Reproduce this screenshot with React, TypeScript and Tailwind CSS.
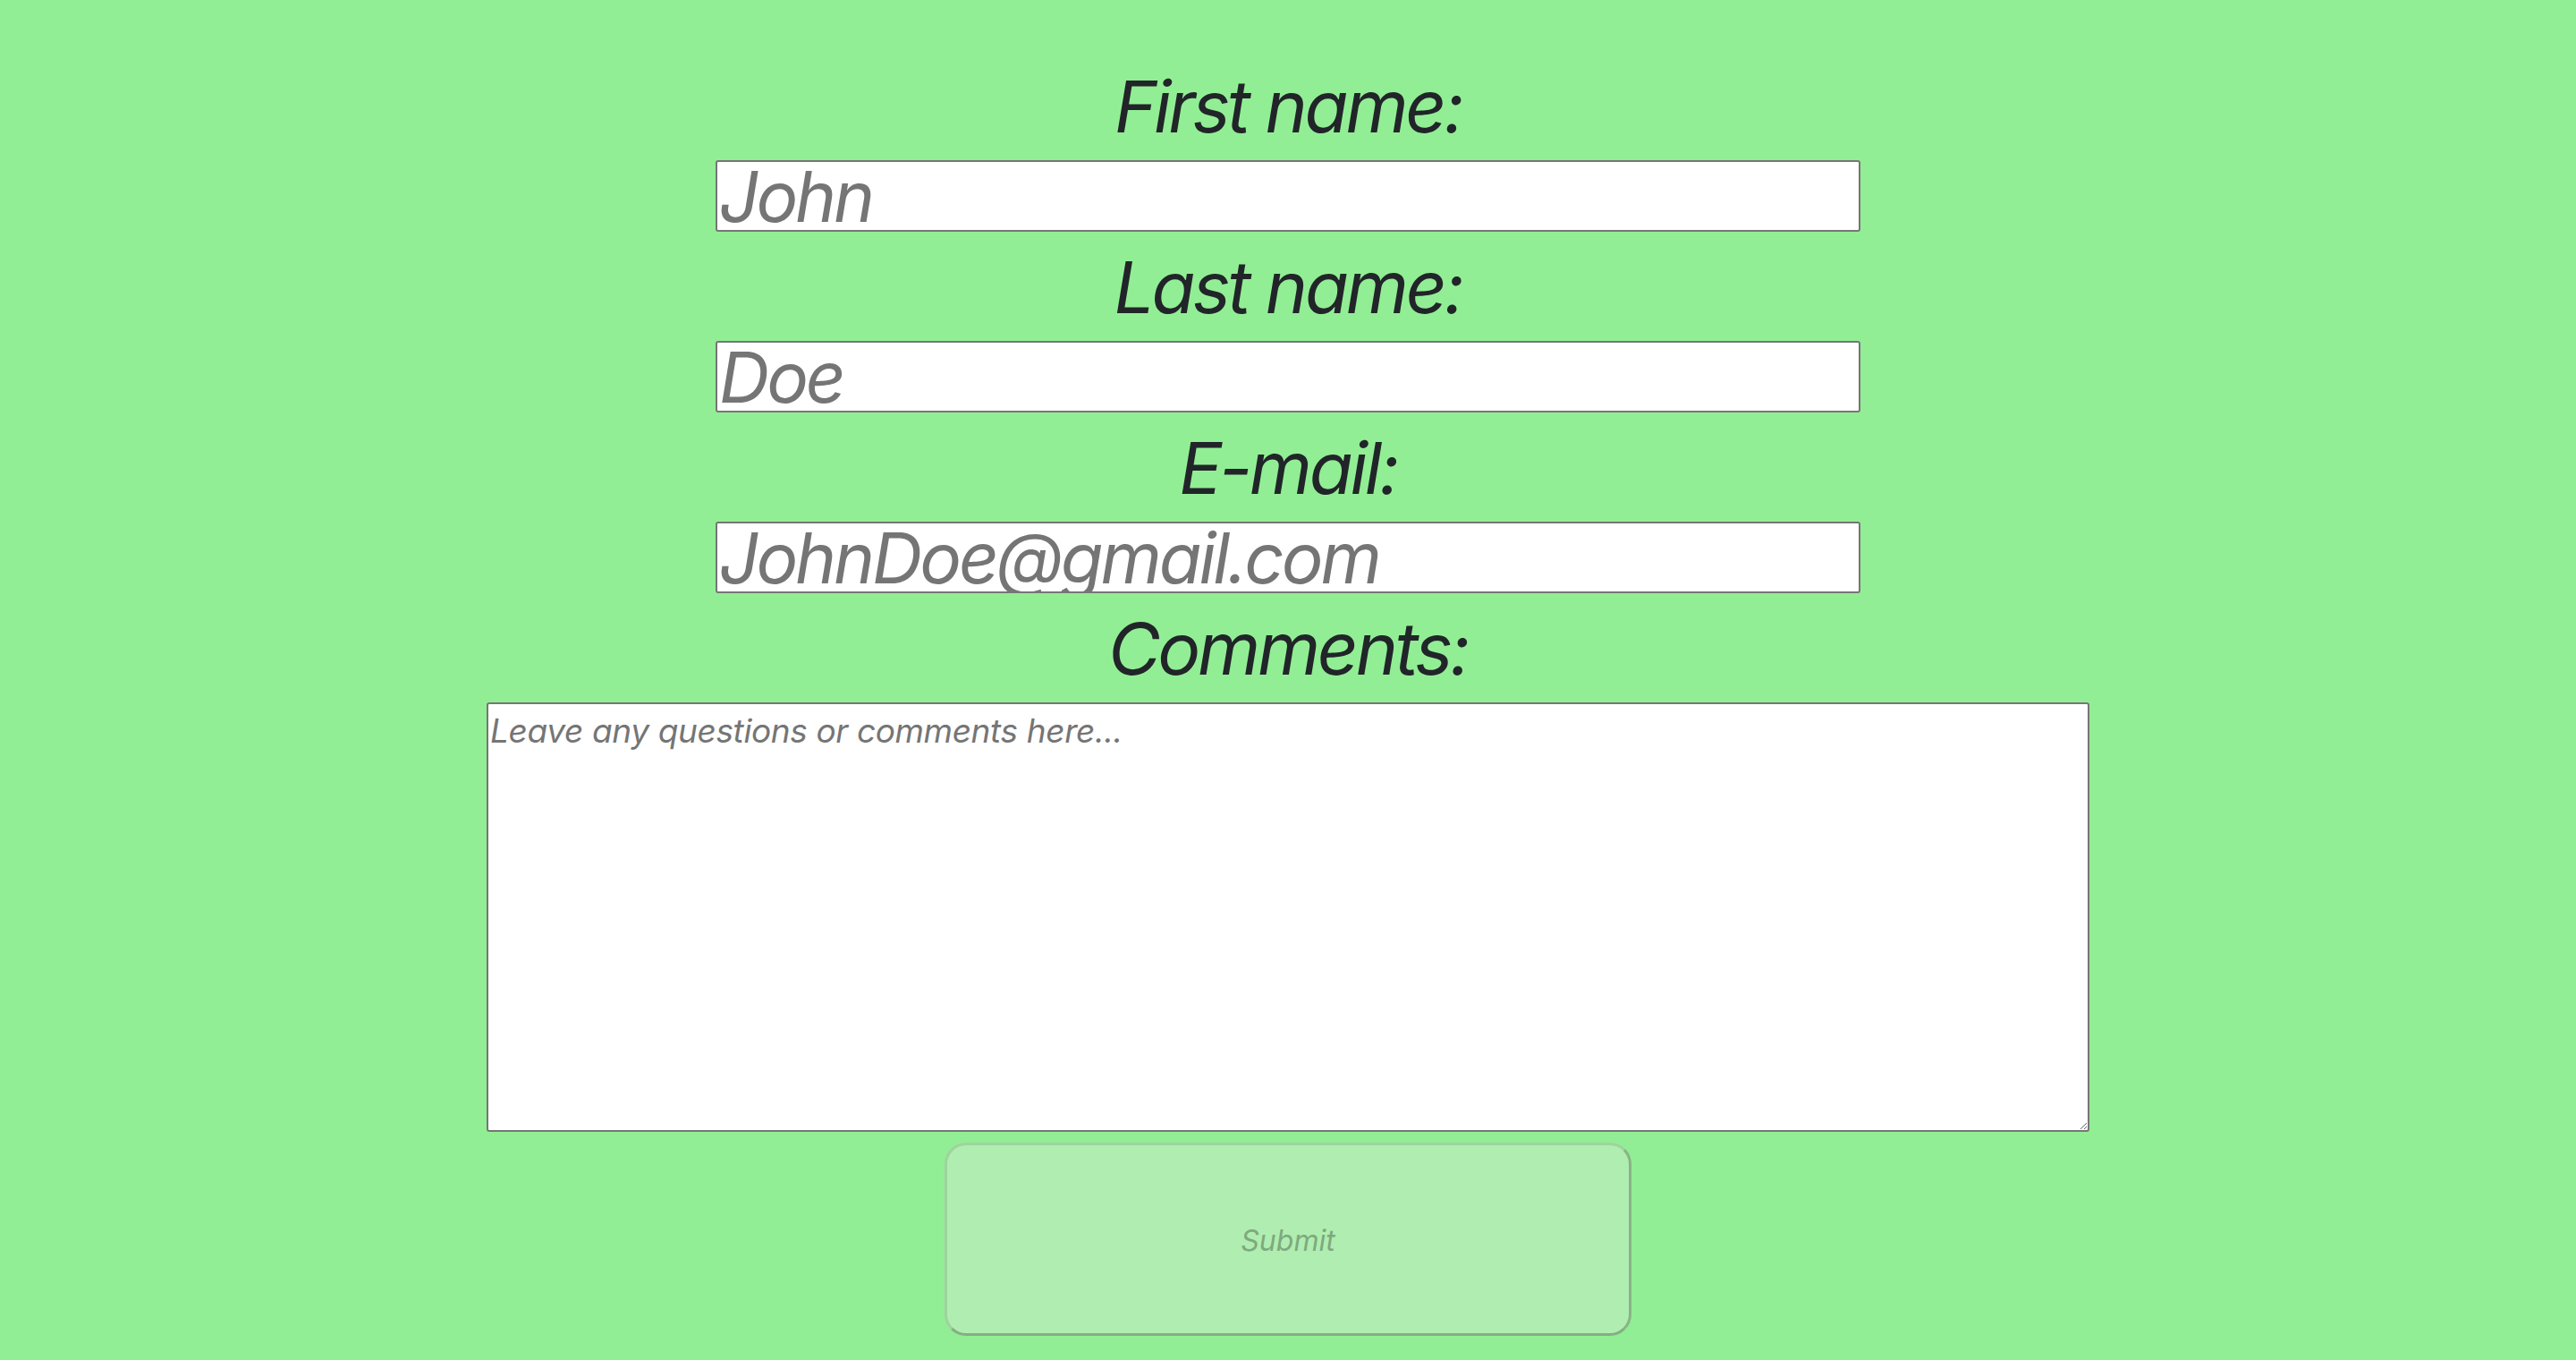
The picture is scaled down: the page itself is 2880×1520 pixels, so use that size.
import { useState } from 'react';

function Field({ label, placeholder, type = 'text' }: { label: string; placeholder: string; type?: string }) {
  const [value, setValue] = useState('');
  return (
    <>
      <label className="block text-[80px] leading-[120px] tracking-[-0.04em] italic text-[#212529]">{label}</label>
      <input
        type={type}
        value={value}
        onChange={(e) => setValue(e.target.value)}
        placeholder={placeholder}
        className="mb-[2px] box-border h-[80px] w-[1280px] rounded-[3px] border-2 border-[#767676] bg-white px-[2px] font-['Inter','Noto_Sans',sans-serif] text-[78px] tracking-[-0.04em] italic text-[#212529] outline-none placeholder:text-[#757575]"
      />
    </>
  );
}

export default function App() {
  const [comments, setComments] = useState('');

  return (
    <div className="min-h-[1520px] w-full bg-[#92ee94] pt-[59px] font-['Inter','Noto_Sans',sans-serif]">
      <form className="flex flex-col items-center" onSubmit={(e) => e.preventDefault()}>
        <Field label="First name:" placeholder="John" />
        <Field label="Last name:" placeholder="Doe" />
        <Field label="E-mail:" placeholder="JohnDoe@gmail.com" type="email" />

        <label className="block text-[80px] leading-[120px] tracking-[-0.04em] italic text-[#212529]">Comments:</label>
        <textarea
          value={comments}
          onChange={(e) => setComments(e.target.value)}
          placeholder="Leave any questions or comments here..."
          className="box-border block h-[480px] w-[1792px] rounded-[3px] border-2 border-[#767676] bg-white p-[2px] font-['Inter','Noto_Sans',sans-serif] text-[37px] leading-[1.5] tracking-[-0.01em] italic text-[#212529] outline-none placeholder:text-[#757575]"
        />

        <button
          type="submit"
          className="mt-[12px] box-border h-[216px] w-[768px] rounded-[24px] border-[3px] border-t-[#a0d2a0] border-l-[#a0d2a0] border-r-[#88b488] border-b-[#84ae84] bg-[#afeeb0] pt-[4px] font-['Inter','Noto_Sans',sans-serif] text-[32px] italic text-[#7ea97f]"
        >
          Submit
        </button>
      </form>
    </div>
  );
}
